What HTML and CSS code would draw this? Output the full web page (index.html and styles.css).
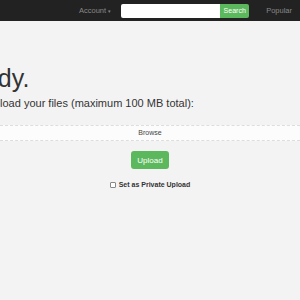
FILE: index.html
```html
<!DOCTYPE html>
<html>
    <head>
        <meta charset="utf-8">
        <title>Upload</title>
        <link rel="stylesheet" href="styles.css">
    </head>
    <body>
        <div class="navbar">
            <span class="navlink">Account <span class="caret">&#9662;</span></span>
            <form class="search">
                <input class="search-input" type="text">
                <button class="search-btn" type="button">Search</button>
            </form>
            <span class="navlink popular">Popular</span>
        </div>
        <div class="main">
            <div class="intro">
                <h1 class="title">Ready.</h1>
                <p class="lead">Upload your files (maximum 100 MB total):</p>
            </div>
            <div class="browse">Browse</div>
            <button class="upload-btn" type="button">Upload</button>
            <label class="private"><input type="checkbox" class="check"> Set as Private Upload</label>
        </div>
    </body>
</html>
```

FILE: styles.css
```css
* {
    padding: 0;
    margin: 0;
    box-sizing: border-box;
}
body {
    background-color: #f3f3f3;
    font-family: "Liberation Sans", Arial, sans-serif;
    color: #333;
    overflow: hidden;
}
.navbar {
    height: 21px;
    background-color: #222;
    display: flex;
    align-items: center;
}
.navlink {
    color: #888;
    font-size: 7.5px;
    margin-left: 79px;
}
.caret {
    font-size: 5px;
}
.search {
    display: flex;
    margin-left: 10px;
}
.search-input {
    width: 99px;
    height: 14px;
    border: 0;
    border-radius: 2px 0 0 2px;
    background-color: #fff;
}
.search-btn {
    width: 29px;
    height: 14px;
    border: 0;
    border-radius: 0 2px 2px 0;
    background-color: #5cb85c;
    color: #fff;
    font-family: inherit;
    font-size: 7px;
}
.popular {
    margin-left: 17px;
}
.main {
    display: flex;
    flex-direction: column;
    align-items: center;
}
.intro {
    align-self: stretch;
    margin-left: -14px;
}
.title {
    font-size: 25px;
    font-weight: normal;
    margin-left: -34px;
    margin-top: 42px;
    line-height: 30px;
}
.lead {
    font-size: 11px;
    margin-top: 3px;
    line-height: 14px;
}
.browse {
    align-self: stretch;
    margin-top: 15px;
    height: 16px;
    background-color: #fcfcfc;
    border-top: 1px dashed #ddd;
    border-bottom: 1px dashed #ddd;
    font-size: 7px;
    color: #444;
    text-align: center;
    line-height: 14px;
}
.upload-btn {
    margin-top: 10px;
    width: 38px;
    height: 18px;
    border: 0;
    border-radius: 3px;
    background-color: #5cb85c;
    color: #fff;
    font-family: inherit;
    font-size: 8px;
}
.private {
    margin-top: 12px;
    font-size: 7px;
    font-weight: bold;
    display: flex;
    align-items: center;
    gap: 3px;
}
.check {
    appearance: none;
    width: 6px;
    height: 6px;
    margin: 0;
    border: 1px solid #888;
    border-radius: 1px;
    background-color: #fff;
}
```
